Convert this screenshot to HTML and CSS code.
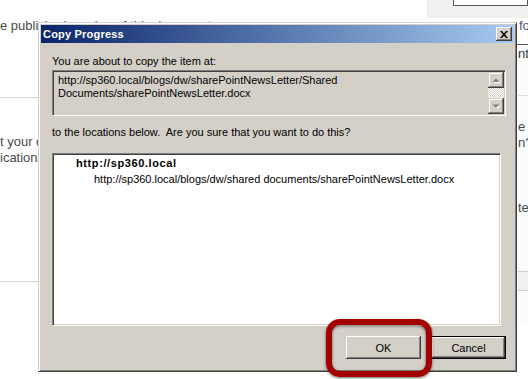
FILE: index.html
```html
<!DOCTYPE html>
<html lang="en">
<head>
  <meta charset="UTF-8">
  <title>Copy Progress</title>
  <link rel="stylesheet" href="styles.css">
</head>
<body>
  <!-- page behind the dialog -->
  <div class="page">
    <main class="main">
      <p class="intro">e published version of this document</p>
      <hr class="rule rule-top">
      <p class="note">t your c<br>ications:</p>
      <hr class="rule rule-bottom">
    </main>
    <aside class="side">
      <div class="side-head"><div class="side-field"></div></div>
      <p class="side-label">fo</p>
      <div class="side-panel">
        <p class="side-input">nt</p>
        <hr class="side-rule">
        <p class="side-text">e<br>n?</p>
        <p class="side-text side-last">te</p>
        <div class="side-band"></div>
      </div>
    </aside>
  </div>

  <!-- dialog -->
  <div class="dialog">
    <div class="titlebar">
      <span class="title">Copy Progress</span>
      <button class="close">
        <svg width="8" height="7" viewBox="0 0 8 7">
          <path d="M0 0h2l2 2.2L6 0h2L5 3.5 8 7H6L4 4.8 2 7H0l3-3.5z" fill="#000"/>
        </svg>
      </button>
    </div>
    <div class="dialog-body">
      <p class="label">You are about to copy the item at:</p>
      <div class="source">
        <div class="source-text">http://sp360.local/blogs/dw/sharePointNewsLetter/Shared<br>Documents/sharePointNewsLetter.docx</div>
        <div class="scrollbar">
          <span class="sb-btn">
            <svg width="14" height="14" viewBox="0 0 14 14">
              <polygon points="3.5,9 7,5.5 10.5,9" fill="#fff" transform="translate(1 1)"/>
              <polygon points="3.5,9 7,5.5 10.5,9" fill="#808080"/>
            </svg>
          </span>
          <span class="sb-track"></span>
          <span class="sb-btn">
            <svg width="14" height="14" viewBox="0 0 14 14">
              <polygon points="3.5,5.5 10.5,5.5 7,9" fill="#fff" transform="translate(1 1)"/>
              <polygon points="3.5,5.5 10.5,5.5 7,9" fill="#808080"/>
            </svg>
          </span>
        </div>
      </div>
      <p class="label label-second">to the locations below.&nbsp; Are you sure that you want to do this?</p>
      <div class="dest">
        <p class="dest-site">http://sp360.local</p>
        <p class="dest-item">http://sp360.local/blogs/dw/shared documents/sharePointNewsLetter.docx</p>
      </div>
      <div class="actions">
        <button class="btn">OK</button>
        <button class="btn btn-focus">Cancel</button>
      </div>
    </div>
  </div>

  <!-- annotation -->
  <div class="callout"></div>
</body>
</html>
```

FILE: styles.css
```css
* {
  margin: 0;
  padding: 0;
  box-sizing: border-box;
}

body {
  font-family: "Liberation Sans", Arial, sans-serif;
  background: #fff;
  color: #4a4a4a;
  overflow: hidden;
  width: 528px;
  height: 379px;
}

/* background page */
.page {
  display: flex;
  height: 379px;
}

.main {
  width: 427px;
  flex: none;
  padding-top: 18px;
  font-size: 13px;
  line-height: 16px;
}

.rule {
  border: 0;
  border-top: 1px solid #d6d6d6;
}

.rule-top {
  margin-top: 63px;
}

.note {
  margin-top: 36px;
  white-space: nowrap;
}

.rule-bottom {
  margin-top: 115px;
}

.side {
  width: 101px;
  flex: none;
  font-size: 13px;
  line-height: 16px;
}

.side-head {
  height: 18px;
  background: #f0f0f0;
  padding-left: 26px;
}

.side-field {
  height: 6px;
  background: #fff;
  border: 1px solid #555;
  border-top: 0;
}

.side-label {
  padding-left: 92px;
  color: #4a5a78;
}

.side-panel {
  margin-left: 89px;
  margin-top: 10px;
  height: 281px;
  border-top: 1px solid #555;
  border-left: 1px solid #9a9a9a;
  background: #fbfbfb;
  padding-left: 1px;
}

.side-input {
  padding-top: 1px;
  color: #333;
}

.side-rule {
  border: 0;
  border-top: 1px solid #dedede;
  margin-top: 33px;
}

.side-text {
  margin-top: 23px;
}

.side-last {
  margin-top: 49px;
}

.side-band {
  margin-top: 55px;
  height: 20px;
  border-top: 1px solid #d0d0d0;
  border-bottom: 1px solid #d0d0d0;
  background: #f0f0f0;
}

/* dialog window */
.dialog {
  position: absolute;
  left: 38px;
  top: 22px;
  width: 479px;
  height: 350px;
  background: #d4d0c8;
  border: 1px solid;
  border-color: #d4d0c8 #404040 #404040 #d4d0c8;
  box-shadow: inset 1px 1px #fff, inset -1px -1px #808080;
  padding: 2px;
  display: flex;
  flex-direction: column;
  color: #000;
  font-size: 11px;
  line-height: 13px;
}

.titlebar {
  height: 18px;
  flex: none;
  display: flex;
  align-items: center;
  justify-content: space-between;
  padding: 0 2px;
  background: linear-gradient(90deg, #0a246a, #a6caf0);
  color: #fff;
}

.title {
  font-weight: bold;
  letter-spacing: 0.2px;
}

.close {
  width: 16px;
  height: 14px;
  display: flex;
  align-items: center;
  justify-content: center;
  border: 0;
  background: #d4d0c8;
  box-shadow: inset -1px -1px #404040, inset 1px 1px #fff, inset -2px -2px #808080;
}

.dialog-body {
  flex: 1;
  padding: 12px 8px 0 11px;
  display: flex;
  flex-direction: column;
}

.label {
  white-space: nowrap;
}

.label-second {
  margin-top: 10px;
}

/* sunken read-only box */
.source {
  margin-top: 2px;
  height: 46px;
  display: flex;
  border: 1px solid;
  border-color: #808080 #fff #fff #808080;
  box-shadow: inset 1px 1px #404040, inset -1px -1px #d4d0c8;
  padding: 1px;
}

.source-text {
  flex: 1;
  padding: 2px 4px;
}

.scrollbar {
  width: 16px;
  display: flex;
  flex-direction: column;
}

.sb-btn {
  height: 16px;
  display: flex;
  align-items: center;
  justify-content: center;
  background: #d4d0c8;
  box-shadow: inset -1px -1px #404040, inset 1px 1px #d4d0c8, inset -2px -2px #808080, inset 2px 2px #fff;
}

.sb-track {
  flex: 1;
  background-color: #fff;
  background-image: repeating-conic-gradient(#d4d0c8 0 25%, #fff 0 50%);
  background-size: 2px 2px;
}

.dest {
  margin-top: 14px;
  width: 449px;
  height: 173px;
  background: #fff;
  border: 1px solid;
  border-color: #808080 #fff #fff #808080;
  box-shadow: inset 1px 1px #404040, inset -1px -1px #d4d0c8;
  padding: 1px;
  line-height: 16px;
}

.dest-site {
  padding-left: 22px;
  font-weight: bold;
  letter-spacing: 0.6px;
}

.dest-item {
  padding-left: 40px;
  white-space: nowrap;
}

.actions {
  margin-top: 10px;
  display: flex;
  justify-content: flex-end;
  gap: 10px;
}

.btn {
  width: 75px;
  height: 23px;
  border: 0;
  background: #d4d0c8;
  font-family: "Liberation Sans", Arial, sans-serif;
  font-size: 11px;
  color: #000;
  box-shadow: inset -1px -1px #404040, inset 1px 1px #fff, inset -2px -2px #808080;
}

.btn-focus {
  border: 1px solid #000;
}

/* red highlight drawn over the screenshot */
.callout {
  position: absolute;
  left: 326px;
  top: 319px;
  width: 106px;
  height: 58px;
  border: 6px solid #a20000;
  border-radius: 14px;
  box-shadow: 0 1px 3px rgba(0, 0, 0, 0.6), inset 0 1px 3px rgba(0, 0, 0, 0.6);
}
```
